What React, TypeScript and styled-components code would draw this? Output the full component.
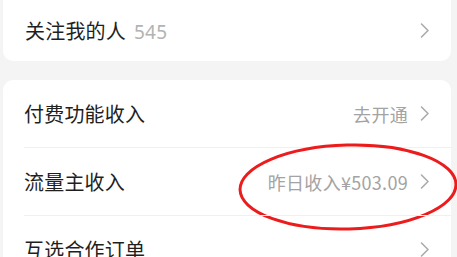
import React from 'react'
import styled, { createGlobalStyle } from 'styled-components';

const GlobalStyle = createGlobalStyle`
  body {
    margin: 0;
    background: #f4f4f4;
    font-family: "Noto Sans CJK SC", "Noto Sans", sans-serif;
  }
`;

type Row = {
    title: string,
    value?: string,
    marked?: boolean
}

const rows: Row[] = [
    { title: '付费功能收入', value: '去开通' },
    { title: '流量主收入', value: '昨日收入¥503.09', marked: true },
    { title: '互选合作订单' },
]

function Chevron() {
    return (
        <svg width="11" height="17" viewBox="0 0 11 17">
            <path d="M2.5 2 L9 8.5 L2.5 15" fill="none" stroke="#ababab" strokeWidth="1.6" strokeLinecap="round" strokeLinejoin="round" />
        </svg>
    )
}

export default function App() {
    return (
        <>
            <GlobalStyle />
            <Page>
                <TopCard>
                    <Item height={61}>
                        <Title>
                            关注我的人<Count>545</Count>
                        </Title>
                        <Right><Chevron /></Right>
                    </Item>
                </TopCard>
                <Card>
                    {rows.map((row, i) => (
                        <Item key={row.title} height={67} divided={i > 0}>
                            <Title>{row.title}</Title>
                            <Right>
                                {row.value && <Value>{row.value}</Value>}
                                <Chevron />
                            </Right>
                            {row.marked && (
                                <Mark viewBox="0 0 224 96">
                                    <ellipse cx="111" cy="47" rx="108" ry="42" fill="none" stroke="#ec1c1c" strokeWidth="3" transform="rotate(-1.5 111 47)" />
                                </Mark>
                            )}
                        </Item>
                    ))}
                </Card>
            </Page>
        </>
    )
}

const Page = styled.div`
  display: flex;
  flex-direction: column;
  gap: 19px;
  padding: 0 6px 0 3px;
  height: 257px;
  overflow: hidden;
`;

const TopCard = styled.div`
  background: #fff;
  border-radius: 0 0 10px 10px;
  padding: 0 0 0 22px;
`;

const Card = styled.div`
  background: #fff;
  border-radius: 10px;
  padding: 0 0 0 21px;
`;

const Item = styled.div<{ height: number, divided?: boolean }>`
  position: relative;
  display: flex;
  align-items: center;
  justify-content: space-between;
  height: ${p => p.height}px;
  padding-right: 21px;
  border-top: ${p => p.divided ? '1px solid #f0f0f0' : 'none'};
`;

const Title = styled.div`
  display: flex;
  align-items: baseline;
  font-size: 20px;
  color: #1f1f1f;
  letter-spacing: 0.2px;
`;

const Count = styled.span`
  margin-left: 8px;
  color: #b3b3b3;
  font-size: 19px;
  font-family: "Noto Sans", sans-serif;
`;

const Right = styled.div`
  display: flex;
  align-items: center;
  gap: 11px;
`;

const Value = styled.span`
  font-size: 18px;
  letter-spacing: 0.3px;
  color: #a3a3a3;
`;

const Mark = styled.svg`
  position: absolute;
  left: 213px;
  top: -8px;
  width: 224px;
  height: 96px;
  pointer-events: none;
`;
